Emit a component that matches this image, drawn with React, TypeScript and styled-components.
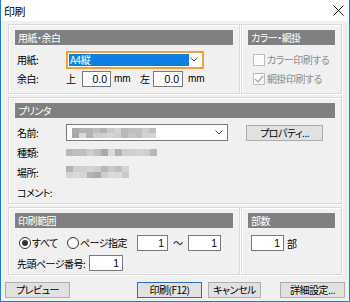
import styled, { createGlobalStyle } from 'styled-components';

const GlobalStyle = createGlobalStyle`
  html, body {
    margin: 0;
    padding: 0;
    background: #fff;
  }
  body {
    font-family: "Noto Sans CJK JP", "Noto Sans", sans-serif;
    font-size: 10px;
    font-feature-settings: "palt" 1;
    font-variant-east-asian: proportional-width;
    letter-spacing: -0.5px;
    color: #000;
  }
  * {
    box-sizing: border-box;
  }
`;

const Window = styled.div`
  width: 350px;
  height: 302px;
  border: 1px solid #2b79d0;
  border-top: none;
  background: #f0f0f0;
  display: flex;
  flex-direction: column;
`;

const TitleBar = styled.div`
  height: 21px;
  background: #fff;
  display: flex;
  align-items: center;
  justify-content: space-between;
  padding: 0 5px 0 3px;
  font-size: 11px;
`;

const Body = styled.div`
  flex: 1;
  display: flex;
  flex-direction: column;
  padding: 3px 7px 0 7px;
  gap: 3px;
`;

const Split = styled.div`
  display: grid;
  grid-template-columns: 232px 1fr;
  gap: 1px;
`;

const Group = styled.div<{ $h: number }>`
  height: ${p => p.$h}px;
  border: 1px solid #d9d9d9;
  box-shadow: 1px 1px 0 #fff, inset 1px 1px 0 #fff;
  padding: 4px 5px 0 5px;
  display: flex;
  flex-direction: column;
`;

const Header = styled.div`
  height: 17px;
  background: #808080;
  border: 1px solid #f4f4f4;
  color: #fff;
  padding-left: 3px;
  display: flex;
  align-items: center;
  margin-bottom: 4px;
`;

const Row = styled.div<{ $h?: number }>`
  height: ${p => p.$h ?? 19}px;
  display: flex;
  align-items: center;
  padding-left: 3px;
`;

const Label = styled.span<{ $w?: number }>`
  width: ${p => p.$w ?? 49}px;
  flex-shrink: 0;
  white-space: nowrap;
`;

const Text = styled.span<{ $ml?: number; $w?: number; $muted?: boolean }>`
  margin-left: ${p => p.$ml ?? 0}px;
  width: ${p => (p.$w ? `${p.$w}px` : 'auto')};
  flex-shrink: 0;
  color: ${p => (p.$muted ? '#8d8d8d' : '#000')};
  white-space: nowrap;
`;

const Tilde = styled.span`
  width: 20px;
  text-align: center;
  flex-shrink: 0;
  font-feature-settings: normal;
  font-variant-east-asian: normal;
  letter-spacing: 0;
`;

const Select = styled.div<{ $w: number; $focus?: boolean }>`
  width: ${p => p.$w}px;
  height: ${p => (p.$focus ? 18 : 17)}px;
  background: #fff;
  border: ${p => (p.$focus ? '2px solid #f1a23a' : '1px solid #7a7a7a')};
  display: flex;
  align-items: center;
  padding: 0 4px 0 ${p => (p.$focus ? 1 : 5)}px;
`;

const Highlight = styled.span`
  width: 120px;
  height: 12px;
  background: #0d7fe0;
  color: #fff;
  display: flex;
  align-items: center;
  padding-left: 1px;
  line-height: 1;
`;

const Chevron = styled.svg`
  margin-left: auto;
`;

const NumBox = styled.div<{ $w: number; $ml?: number }>`
  width: ${p => p.$w}px;
  height: 16px;
  margin-left: ${p => p.$ml ?? 0}px;
  flex-shrink: 0;
  background: #fff;
  border: 1px solid #7a7a7a;
  display: flex;
  align-items: center;
  justify-content: flex-end;
  padding-right: 3px;
  font-family: "Liberation Sans", sans-serif;
  font-size: 10.5px;
  letter-spacing: 0;
`;

const Unit = styled.span<{ $ml?: number; $w?: number }>`
  margin-left: ${p => p.$ml ?? 0}px;
  width: ${p => (p.$w ? `${p.$w}px` : 'auto')};
  flex-shrink: 0;
  font-family: "Liberation Sans", sans-serif;
  font-size: 10px;
  letter-spacing: 0;
`;

const Check = styled.span`
  width: 12px;
  height: 12px;
  border: 1px solid #bcbcbc;
  background: #fcfcfc;
  display: inline-flex;
  align-items: center;
  justify-content: center;
  margin-right: 2px;
  flex-shrink: 0;
`;

const Radio = styled.span<{ $on?: boolean; $ml?: number }>`
  width: 12px;
  height: 12px;
  margin-left: ${p => p.$ml ?? 0}px;
  border-radius: 50%;
  border: 1px solid #333;
  background: #fff;
  display: inline-flex;
  align-items: center;
  justify-content: center;
  flex-shrink: 0;
  &::after {
    content: "";
    width: 6px;
    height: 6px;
    border-radius: 50%;
    background: ${p => (p.$on ? '#333' : 'transparent')};
  }
`;

const Mosaic = styled.div<{ $cols: number; $cw: number; $ch: number }>`
  display: grid;
  grid-template-columns: repeat(${p => p.$cols}, ${p => p.$cw}px);
  grid-auto-rows: ${p => p.$ch}px;
`;

const Cell = styled.span<{ $c: string }>`
  background: ${p => p.$c};
`;

const Button = styled.button<{ $w: number; $default?: boolean; $ml?: number }>`
  width: ${p => p.$w}px;
  height: 16px;
  margin-left: ${p => p.$ml ?? 0}px;
  flex-shrink: 0;
  padding: 0;
  background: #e1e1e1;
  border: 1px solid ${p => (p.$default ? '#2a6fba' : '#adadad')};
  font-family: inherit;
  font-size: 10px;
  font-feature-settings: "palt" 1;
  letter-spacing: -0.5px;
  color: #000;
  display: flex;
  align-items: center;
  justify-content: center;
  line-height: 1;
`;

const ButtonBar = styled.div`
  display: flex;
  align-items: center;
  margin: 4px -3px 0 -3px;
  gap: 6px;
`;

const Spacer = styled.div`
  flex: 1;
`;

const ColorContent = styled.div`
  padding-left: 3px;
`;

const shades = ['#c9c9c9', '#b3b3b3', '#d4d4d4', '#a9a9a9', '#bfbfbf', '#dadada', '#b8b8b8', '#cecece'];
const pick = (seed: number, n: number) =>
  Array.from({ length: n }, (_, i) => shades[(i * 5 + seed * 3 + ((i * i) % 7)) % shades.length]);

const MosaicBlock = ({ cols, rows, cw, ch, seed }: { cols: number; rows: number; cw: number; ch: number; seed: number }) => (
  <Mosaic $cols={cols} $cw={cw} $ch={ch}>
    {pick(seed, cols * rows).map((c, i) => (
      <Cell key={i} $c={c} />
    ))}
  </Mosaic>
);

const DownArrow = () => (
  <Chevron width="8" height="5" viewBox="0 0 8 5">
    <polyline points="0.5,0.5 4,4 7.5,0.5" fill="none" stroke="#444" strokeWidth="1" />
  </Chevron>
);

export default function App() {
  return (
    <>
      <GlobalStyle />
      <Window>
        <TitleBar>
          <span>印刷</span>
          <svg width="11" height="11" viewBox="0 0 11 11">
            <path d="M0.5 0.5 L10.5 10.5 M10.5 0.5 L0.5 10.5" stroke="#111" strokeWidth="1" />
          </svg>
        </TitleBar>
        <Body>
          <Split>
            <Group $h={70}>
              <Header>用紙・余白</Header>
              <Row $h={19}>
                <Label>用紙:</Label>
                <Select $w={138} $focus>
                  <Highlight>A4縦</Highlight>
                  <DownArrow />
                </Select>
              </Row>
              <Row $h={19}>
                <Label>余白:</Label>
                <Text $w={16}>上</Text>
                <NumBox $w={29}>0.0</NumBox>
                <Unit $ml={3} $w={26}>mm</Unit>
                <Text $w={13}>左</Text>
                <NumBox $w={30}>0.0</NumBox>
                <Unit $ml={5}>mm</Unit>
              </Row>
            </Group>
            <Group $h={70}>
              <Header>カラー・網掛</Header>
              <ColorContent>
                <Row $h={19}>
                  <Check />
                  <Text $muted>カラー印刷する</Text>
                </Row>
                <Row $h={19}>
                  <Check>
                    <svg width="10" height="8" viewBox="0 0 10 8">
                      <polyline points="1,4 4,7 9,1" fill="none" stroke="#a8a8a8" strokeWidth="1.2" />
                    </svg>
                  </Check>
                  <Text $muted>網掛印刷する</Text>
                </Row>
              </ColorContent>
            </Group>
          </Split>

          <Group $h={107}>
            <Header>プリンタ</Header>
            <Row $h={20}>
              <Label $w={49}>名前:</Label>
              <Select $w={162}>
                <MosaicBlock cols={12} rows={2} cw={7} ch={5} seed={1} />
                <DownArrow />
              </Select>
              <Button $w={77} $ml={18}>プロパティ...</Button>
            </Row>
            <Row $h={20}>
              <Label $w={49}>種類:</Label>
              <MosaicBlock cols={13} rows={1} cw={7} ch={7} seed={2} />
            </Row>
            <Row $h={20}>
              <Label $w={49}>場所:</Label>
              <MosaicBlock cols={9} rows={2} cw={7} ch={6} seed={3} />
            </Row>
            <Row $h={21}>
              <Label $w={49}>コメント:</Label>
            </Row>
          </Group>

          <Split>
            <Group $h={68}>
              <Header>印刷範囲</Header>
              <Row $h={20}>
                <Radio $on $ml={2} />
                <Text $ml={1} $w={35}>すべて</Text>
                <Radio />
                <Text $ml={1} $w={57}>ページ指定</Text>
                <NumBox $w={31}>1</NumBox>
                <Tilde>～</Tilde>
                <NumBox $w={33}>1</NumBox>
              </Row>
              <Row $h={22}>
                <Label $w={72}>先頭ページ番号:</Label>
                <NumBox $w={34}>1</NumBox>
              </Row>
            </Group>
            <Group $h={68}>
              <Header>部数</Header>
              <Row $h={20}>
                <NumBox $w={33} $ml={1}>1</NumBox>
                <Text $ml={3}>部</Text>
              </Row>
            </Group>
          </Split>

          <ButtonBar>
            <Button $w={65}>プレビュー</Button>
            <Spacer />
            <Button $w={65} $default>印刷(F12)</Button>
            <Button $w={53}>キャンセル</Button>
            <Button $w={65} $ml={13}>詳細設定...</Button>
          </ButtonBar>
        </Body>
      </Window>
    </>
  );
}
